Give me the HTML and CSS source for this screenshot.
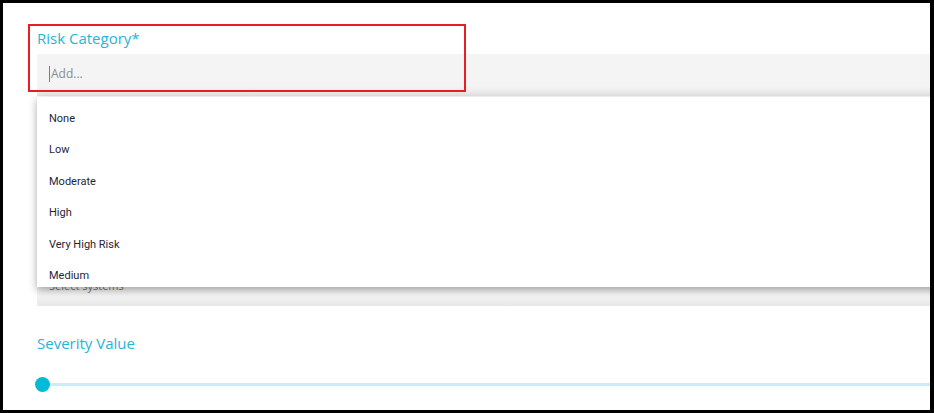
FILE: index.html
```html
<!DOCTYPE html>
<html lang="en">
<head>
    <meta charset="UTF-8">
    <meta name="viewport" content="width=device-width, initial-scale=1.0">
    <title>Risk Category</title>
    <link rel="stylesheet" href="styles.css">
</head>
<body>
    <div class="frame">
        <div class="form">
            <div class="group">
                <label class="field-label">Risk Category*</label>
                <div class="field">
                    <span class="caret"></span>
                    <span class="placeholder">Add...</span>
                </div>
                <ul class="menu">
                    <li>None</li>
                    <li>Low</li>
                    <li>Moderate</li>
                    <li>High</li>
                    <li>Very High Risk</li>
                    <li>Medium</li>
                </ul>
            </div>
            <div class="group systems">
                <div class="field">
                    <span class="placeholder">Select systems</span>
                </div>
            </div>
            <div class="group severity">
                <label class="field-label">Severity Value</label>
                <div class="slider">
                    <div class="track"></div>
                    <div class="thumb"></div>
                </div>
            </div>
        </div>
        <div class="highlight"></div>
    </div>
</body>
</html>
```

FILE: styles.css
```css
* {
    box-sizing: border-box;
}
body {
    margin: 0;
    font-family: "Open Sans", sans-serif;
    background: #fff;
}
.frame {
    position: relative;
    width: 934px;
    height: 413px;
    border: 3px solid #000;
    border-right-width: 4px;
    overflow: hidden;
}
.form {
    padding: 25px 0 0 34px;
}
.group {
    position: relative;
}
.field-label {
    display: block;
    color: #27b5d5;
    font-size: 15px;
    line-height: 20px;
    height: 26px;
}
.field {
    display: flex;
    align-items: center;
    height: 42px;
    padding: 0 0 3px 12px;
    margin-right: -10px;
    background: linear-gradient(#f4f4f4 0, #f4f4f4 32px, #e7e7e7 42px);
}
.caret {
    width: 1px;
    height: 16px;
    background: #1aa3c4;
    margin-right: 1px;
}
.placeholder {
    color: #8a8a8a;
    font-size: 12px;
}
.menu {
    position: absolute;
    top: 69px;
    left: 0;
    right: -10px;
    height: 190px;
    margin: 0;
    padding: 6px 0 0;
    list-style: none;
    background: #fff;
    overflow: hidden;
    box-shadow: 0 3px 8px rgba(0, 0, 0, 0.35);
    z-index: 2;
    font-family: Roboto, sans-serif;
}
.menu li {
    height: 31.4px;
    line-height: 31.4px;
    padding-left: 12px;
    font-size: 11px;
    color: #1f1f38;
}
.systems {
    margin-top: 168px;
}
.systems .field {
    padding-bottom: 0;
}
.systems .placeholder {
    color: #777;
    font-size: 11px;
}
.severity {
    margin-top: 27px;
}
.slider {
    position: relative;
    height: 30px;
    margin-top: 11px;
}
.track {
    position: absolute;
    left: 5px;
    right: -10px;
    top: 13px;
    height: 3px;
    background: #c6eef6;
}
.thumb {
    position: absolute;
    left: -2px;
    top: 7px;
    width: 15px;
    height: 15px;
    border-radius: 50%;
    background: #04bad6;
}
.highlight {
    position: absolute;
    left: 25px;
    top: 21px;
    width: 438px;
    height: 68px;
    border: 2px solid #ec1c24;
    z-index: 3;
}
```
